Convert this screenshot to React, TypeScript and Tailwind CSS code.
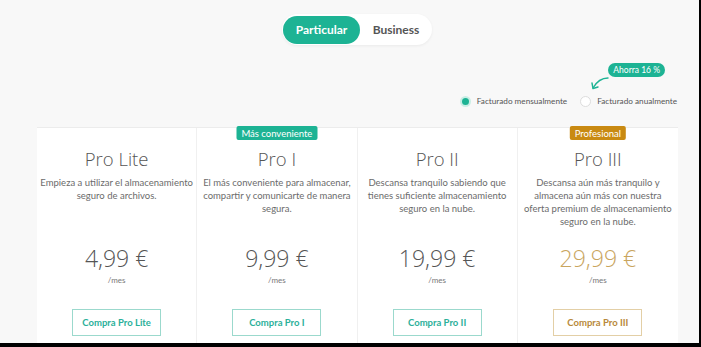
import { useState } from 'react'

type Plan = {
  name: string
  desc: string[]
  price: string
  badge?: { label: string; tone: 'green' | 'gold' }
  gold?: boolean
}

const plans: Plan[] = [
  { name: 'Pro Lite', desc: ['Empieza a utilizar el almacenamiento', 'seguro de archivos.'], price: '4,99 €' },
  {
    name: 'Pro I',
    desc: ['El más conveniente para almacenar,', 'compartir y comunicarte de manera', 'segura.'],
    price: '9,99 €',
    badge: { label: 'Más conveniente', tone: 'green' },
  },
  {
    name: 'Pro II',
    desc: ['Descansa tranquilo sabiendo que', 'tienes suficiente almacenamiento', 'seguro en la nube.'],
    price: '19,99 €',
  },
  {
    name: 'Pro III',
    desc: ['Descansa aún más tranquilo y', 'almacena aún más con nuestra', 'oferta premium de almacenamiento', 'seguro en la nube.'],
    price: '29,99 €',
    badge: { label: 'Profesional', tone: 'gold' },
    gold: true,
  },
]

function PlanCard({ plan, last }: { plan: Plan; last: boolean }) {
  return (
    <div
      className={`relative flex flex-col items-center bg-white pt-[19px] h-[230px] ${last ? '' : 'border-r border-[#f0f0f0]'}`}
    >
      {plan.badge && (
        <div
          className={`absolute top-[-2px] left-1/2 -translate-x-1/2 h-[14px] px-[5px] flex items-center whitespace-nowrap rounded-[2px] text-[9.5px] leading-none text-white ${
            plan.badge.tone === 'green' ? 'bg-[#1db394]' : 'bg-[#c98a12]'
          }`}
        >
          {plan.badge.label}
        </div>
      )}
      <h3 className="font-['Open_Sans'] font-light text-[18.5px] leading-[24px] text-[#555]">{plan.name}</h3>
      <p className="mt-[5px] h-[52px] text-center whitespace-nowrap text-[9.5px] leading-[13px] text-[#6b6b6b]">
        {plan.desc.map((line, i) => (
          <span key={i} className="block">
            {line}
          </span>
        ))}
      </p>
      <div
        className={`mt-[16px] font-['Open_Sans'] font-light text-[23px] leading-[28px] ${
          plan.gold ? 'text-[#c9a55e]' : 'text-[#555]'
        }`}
      >
        {plan.price}
      </div>
      <div className="mt-[2px] text-[8px] leading-[12px] text-[#777]">/mes</div>
      <button
        className={`mt-[23px] w-[89px] h-[27px] border bg-white text-[9.5px] font-bold ${
          plan.gold ? 'border-[#e3cfa6] text-[#b8893a]' : 'border-[#9bd9cd] text-[#2bb09a]'
        }`}
      >
        Compra {plan.name}
      </button>
    </div>
  )
}

export default function App() {
  const [tab, setTab] = useState<'particular' | 'business'>('particular')
  const [monthly, setMonthly] = useState(true)

  return (
    <div className="w-[701px] h-[347px] overflow-hidden box-border border-r-2 border-b-4 border-black bg-[#f8f8f8] font-['Lato',sans-serif]">
      <div className="flex flex-col h-full">
        {/* Toggle */}
        <div className="flex justify-center pt-[14px] pl-[15px]">
          <div className="flex items-center h-[31px] w-[150px] rounded-full bg-white shadow-[0_1px_3px_rgba(0,0,0,0.06)] pl-[1px]">
            <button
              onClick={() => setTab('particular')}
              className={`h-[28px] w-[77px] rounded-full text-[12px] font-bold ${
                tab === 'particular' ? 'bg-[#1db394] text-white' : 'text-[#555]'
              }`}
            >
              Particular
            </button>
            <button
              onClick={() => setTab('business')}
              className={`h-[28px] flex-1 rounded-full text-[12px] font-bold ${
                tab === 'business' ? 'bg-[#1db394] text-white' : 'text-[#555]'
              }`}
            >
              Business
            </button>
          </div>
        </div>

        {/* Billing */}
        <div className="relative mt-[50px] flex items-center justify-end pr-[22px] gap-[13px] text-[8.2px] text-[#555]">
          <div className="absolute right-[34px] top-[-32px] h-[14px] px-[5px] flex items-center rounded-full bg-[#1db394] text-white text-[8.5px] leading-none">
            Ahorra 16 %
          </div>
          <svg className="absolute right-[89px] top-[-20px]" width="20" height="16" viewBox="0 0 20 16" fill="none">
            <path d="M18 3 C12 3 7 6 3 13" stroke="#1db394" strokeWidth="1.4" strokeLinecap="round" />
            <path d="M2 8 L3 13.5 L8 12" stroke="#1db394" strokeWidth="1.4" strokeLinecap="round" strokeLinejoin="round" />
          </svg>
          <button onClick={() => setMonthly(true)} className="flex items-center gap-[6px]">
            <span className={`w-[11px] h-[11px] rounded-full flex items-center justify-center ${monthly ? 'bg-[#c8eee5]' : 'border border-[#ddd] bg-white'}`}>
              {monthly && <span className="w-[7px] h-[7px] rounded-full bg-[#1db394]" />}
            </span>
            Facturado mensualmente
          </button>
          <button onClick={() => setMonthly(false)} className="flex items-center gap-[6px]">
            <span className={`w-[11px] h-[11px] rounded-full flex items-center justify-center ${!monthly ? 'bg-[#c8eee5]' : 'border border-[#ddd] bg-white'}`}>
              {!monthly && <span className="w-[7px] h-[7px] rounded-full bg-[#1db394]" />}
            </span>
            Facturado anualmente
          </button>
        </div>

        {/* Plans */}
        <div className="mt-[20px] ml-[37px] w-[641px] grid grid-cols-4 border-t border-[#ececec]">
          {plans.map((p, i) => (
            <PlanCard key={p.name} plan={p} last={i === plans.length - 1} />
          ))}
        </div>
      </div>
    </div>
  )
}
